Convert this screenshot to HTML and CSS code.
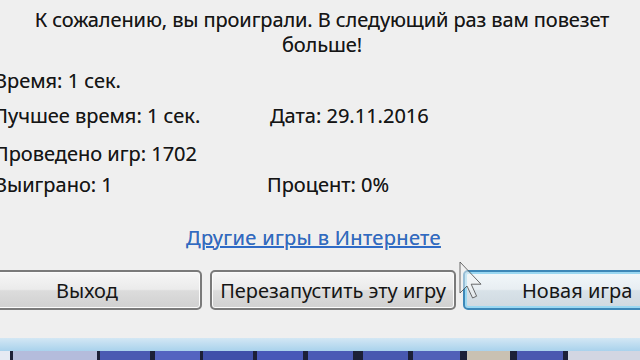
FILE: index.html
```html
<!DOCTYPE html>
<html lang="ru">
<head>
<meta charset="utf-8">
<link rel="stylesheet" href="styles.css">
</head>
<body>
<div class="dialog">
  <p class="msg">К сожалению, вы проиграли. В следующий раз вам повезет<br>больше!</p>
  <div class="stats">
    <div class="row r1"><span class="c1">Время: 1 сек.</span></div>
    <div class="row r2"><span class="c1">Лучшее время: 1 сек.</span><span class="c2">Дата: 29.11.2016</span></div>
    <div class="row r3"><span class="c1">Проведено игр: 1702</span></div>
    <div class="row r4"><span class="c1">Выиграно: 1</span><span class="c2 c2b">Процент: 0%</span></div>
  </div>
  <div class="linkrow"><a class="link" href="#">Другие игры в Интернете</a></div>
  <div class="buttons">
    <button class="btn b1">Выход</button>
    <button class="btn b2">Перезапустить эту игру</button>
    <button class="btn b3 focus">Новая игра</button>
  </div>
</div>
<div class="strip"></div>
<div class="tiles">
  <i style="width:10px;background:#e6eaf3"></i><i class="d" style="width:3px"></i>
  <i style="width:84px;background:#b4bcdc"></i><i class="d" style="width:3px"></i>
  <i style="width:50px;background:#4a5ab2"></i><i class="d" style="width:5px"></i>
  <i style="width:45px;background:#5464c0"></i><i class="d" style="width:3px"></i>
  <i style="width:50px;background:#3f50aa"></i><i class="d" style="width:4px"></i>
  <i style="width:46px;background:#4858b8"></i><i class="d" style="width:5px"></i>
  <i style="width:45px;background:#4a5ab5"></i><i class="d" style="width:10px"></i>
  <i style="width:45px;background:#4858b0"></i><i class="d" style="width:5px"></i>
  <i style="width:47px;background:#5060b8"></i><i class="d" style="width:7px"></i>
  <i style="width:43px;background:#c9c1b2"></i><i class="d" style="width:7px"></i>
  <i style="width:46px;background:#4a58b0"></i><i class="d" style="width:5px"></i>
  <i style="flex:1;background:#d2d6e2"></i>
</div>
<svg class="cursor" width="24" height="38" viewBox="0 0 12 19">
  <path d="M0.5 0.5 V16 L4 12.5 L6.8 18.5 L8.8 17.6 L6.1 11.6 H11 Z" fill="#f4f4f4" fill-opacity="0.5" stroke="#4a4a4a" stroke-opacity="0.8" stroke-width="0.5" stroke-linejoin="round"/>
</svg>
</body>
</html>
```
FILE: styles.css
```css
html, body {
  margin: 0;
  padding: 0;
}
body {
  width: 640px;
  height: 360px;
  overflow: hidden;
  background: #efefef;
  font-family: "Noto Sans", "Open Sans", sans-serif;
  font-size: 20px;
  color: #151515;
  position: relative;
  text-shadow: 0 0 0.6px rgba(0, 0, 0, 0.45);
}
.dialog {
  height: 338px;
  display: flex;
  flex-direction: column;
  overflow: hidden;
}
.msg {
  margin: 0;
  padding: 7px 0 0 4px;
  text-align: center;
  line-height: 25px;
  letter-spacing: -0.1px;
}
.stats {
  margin-left: -6px;
  margin-top: 12px;
}
.row {
  display: flex;
  height: 24px;
  line-height: 24px;
}
.r2 { margin-top: 11px; }
.r3 { margin-top: 14px; }
.r4 { margin-top: 7px; }
.c1 { width: 276px; flex-shrink: 0; }
.c2b { margin-left: -3px; }
.linkrow {
  margin-top: 29px;
  padding-left: 186px;
  line-height: 24px;
}
.link {
  color: #2f6bc6;
  text-decoration: underline;
  letter-spacing: 0.35px;
}
.buttons {
  margin-top: 20px;
  display: flex;
  height: 40px;
}
.btn {
  flex-shrink: 0;
  font: inherit;
  color: #151515;
  height: 40px;
  border: 2px solid #7a7a7a;
  border-radius: 5px;
  background: linear-gradient(#f6f6f6 0%, #ebebeb 48%, #dcdcdc 52%, #d0d0d0 100%);
  box-shadow: inset 0 0 0 1px #fbfbfb;
  padding: 0;
  white-space: nowrap;
}
.b1 { width: 230px; margin-left: -28px; }
.b2 { width: 246px; margin-left: 8px; }
.b3 {
  width: 230px;
  margin-left: 7px;
  text-align: left;
  padding-left: 57px;
}
.focus {
  border-color: #3d88b8;
  box-shadow: inset 0 0 0 2px #9ad8f2;
  background: linear-gradient(#f2f8fb 0%, #e8eef2 48%, #d8e2e8 52%, #cfd9e0 100%);
}
.strip {
  height: 13px;
  background: linear-gradient(#d3e7f4, #a9d2ec);
}
.tiles {
  display: flex;
  height: 9px;
}
.tiles i {
  display: block;
  height: 9px;
}
.tiles .d {
  background: #1c2038;
}
.cursor {
  position: absolute;
  left: 459px;
  top: 261px;
}
```
